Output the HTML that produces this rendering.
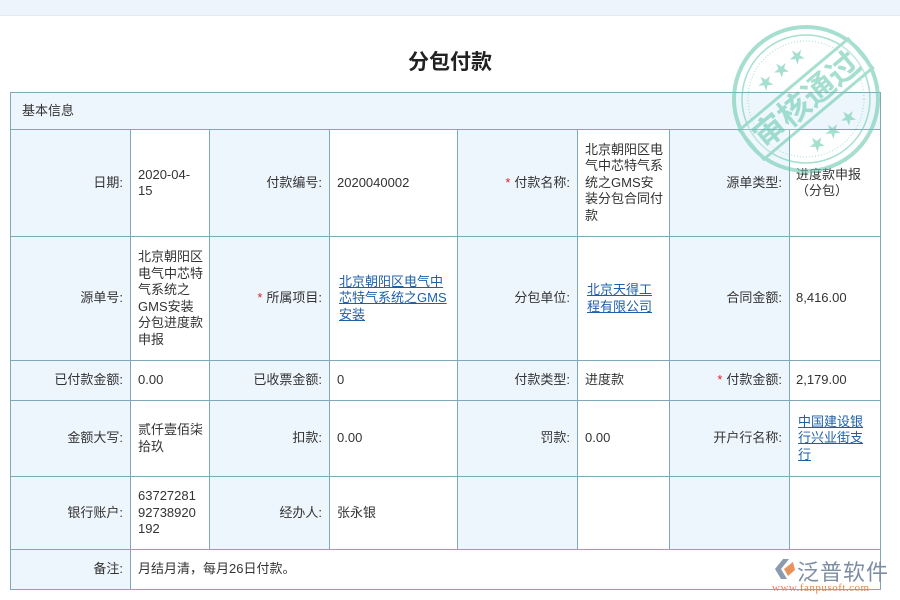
<!DOCTYPE html>
<html><head><meta charset="utf-8"><style>
*{margin:0;padding:0;box-sizing:border-box}
body{width:900px;height:600px;background:#fff;position:relative;overflow:hidden;font-family:"Liberation Sans","Noto Sans CJK SC",sans-serif;font-size:13px;color:#333}
.top{position:absolute;left:0;top:0;width:900px;height:16px;background:#eef4fc;border-bottom:1px solid #e3e9f1}
h1{position:absolute;top:46px;left:0;width:900px;text-align:center;font-size:21px;font-weight:bold;color:#222}
.c{position:absolute;border-right:1px solid #7fa9b8;border-bottom:1px solid #7fa9b8;display:flex;align-items:center;line-height:16.5px}
.l{background:#eef6fd;justify-content:flex-end;padding-right:7px;text-align:right}
.v{background:#fff;padding-left:7px;padding-right:4px}
.frame{position:absolute;left:10px;top:92px;width:871px;height:498px;border-left:1px solid #7fa9b8;border-top:1px solid #7fa9b8}
a{color:#1f5fa8;text-decoration:underline}
.r{color:#d22;margin-right:4px}
</style></head><body>
<div class="top"></div>
<h1>分包付款</h1>
<div class="frame"></div>
<div class="c" style="left:10px;top:92px;width:871px;height:38px;background:#eef6fd;padding-left:11px;border-left:1px solid #7fa9b8;border-top:1px solid #7fa9b8">基本信息</div>

<div class="c l" style="left:11px;top:130px;width:120px;height:107px">日期:</div>
<div class="c v" style="left:131px;top:130px;width:79px;height:107px">2020-04-<br>15</div>
<div class="c l" style="left:210px;top:130px;width:120px;height:107px">付款编号:</div>
<div class="c v" style="left:330px;top:130px;width:128px;height:107px">2020040002</div>
<div class="c l" style="left:458px;top:130px;width:120px;height:107px"><span class="r">*</span>付款名称:</div>
<div class="c v" style="left:578px;top:130px;width:92px;height:107px">北京朝阳区电<br>气中芯特气系<br>统之GMS安<br>装分包合同付<br>款</div>
<div class="c l" style="left:670px;top:130px;width:120px;height:107px">源单类型:</div>
<div class="c v" style="left:790px;top:130px;width:91px;height:107px;padding-left:6px">进度款申报<br>（分包）</div>

<div class="c l" style="left:11px;top:237px;width:120px;height:124px">源单号:</div>
<div class="c v" style="left:131px;top:237px;width:79px;height:124px">北京朝阳区<br>电气中芯特<br>气系统之<br>GMS安装<br>分包进度款<br>申报</div>
<div class="c l" style="left:210px;top:237px;width:120px;height:124px"><span class="r">*</span>所属项目:</div>
<div class="c v" style="left:330px;top:237px;width:128px;height:124px;padding-left:9px"><a>北京朝阳区电气中<br>芯特气系统之GMS<br>安装</a></div>
<div class="c l" style="left:458px;top:237px;width:120px;height:124px">分包单位:</div>
<div class="c v" style="left:578px;top:237px;width:92px;height:124px;padding-left:9px"><a>北京天得工<br>程有限公司</a></div>
<div class="c l" style="left:670px;top:237px;width:120px;height:124px">合同金额:</div>
<div class="c v" style="left:790px;top:237px;width:91px;height:124px;padding-left:6px">8,416.00</div>

<div class="c l" style="left:11px;top:361px;width:120px;height:40px">已付款金额:</div>
<div class="c v" style="left:131px;top:361px;width:79px;height:40px">0.00</div>
<div class="c l" style="left:210px;top:361px;width:120px;height:40px">已收票金额:</div>
<div class="c v" style="left:330px;top:361px;width:128px;height:40px">0</div>
<div class="c l" style="left:458px;top:361px;width:120px;height:40px">付款类型:</div>
<div class="c v" style="left:578px;top:361px;width:92px;height:40px">进度款</div>
<div class="c l" style="left:670px;top:361px;width:120px;height:40px"><span class="r">*</span>付款金额:</div>
<div class="c v" style="left:790px;top:361px;width:91px;height:40px;padding-left:6px">2,179.00</div>

<div class="c l" style="left:11px;top:401px;width:120px;height:76px">金额大写:</div>
<div class="c v" style="left:131px;top:401px;width:79px;height:76px">贰仟壹佰柒<br>拾玖</div>
<div class="c l" style="left:210px;top:401px;width:120px;height:76px">扣款:</div>
<div class="c v" style="left:330px;top:401px;width:128px;height:76px">0.00</div>
<div class="c l" style="left:458px;top:401px;width:120px;height:76px">罚款:</div>
<div class="c v" style="left:578px;top:401px;width:92px;height:76px">0.00</div>
<div class="c l" style="left:670px;top:401px;width:120px;height:76px">开户行名称:</div>
<div class="c v" style="left:790px;top:401px;width:91px;height:76px;padding-left:8px"><a>中国建设银<br>行兴业街支<br>行</a></div>

<div class="c l" style="left:11px;top:477px;width:120px;height:73px">银行账户:</div>
<div class="c v" style="left:131px;top:477px;width:79px;height:73px">63727281<br>92738920<br>192</div>
<div class="c l" style="left:210px;top:477px;width:120px;height:73px">经办人:</div>
<div class="c v" style="left:330px;top:477px;width:128px;height:73px">张永银</div>
<div class="c l" style="left:458px;top:477px;width:120px;height:73px"></div>
<div class="c v" style="left:578px;top:477px;width:92px;height:73px"></div>
<div class="c l" style="left:670px;top:477px;width:120px;height:73px"></div>
<div class="c v" style="left:790px;top:477px;width:91px;height:73px"></div>

<div class="c l" style="left:11px;top:550px;width:120px;height:40px">备注:</div>
<div class="c v" style="left:131px;top:550px;width:750px;height:40px">月结月清，每月26日付款。</div>

<svg style="position:absolute;left:731px;top:24px;opacity:.6" width="150" height="150" viewBox="0 0 150 150">
<g fill="none" stroke="#6ccbb0">
<circle cx="75" cy="75" r="72" stroke-width="4"/>
<circle cx="75" cy="75" r="64" stroke-width="1.5"/>
<circle cx="75" cy="75" r="58" stroke-width="1" stroke-dasharray="1 2"/>
</g>
<g transform="rotate(-40 75 75)">
<rect x="4" y="56" width="142" height="38" fill="rgba(255,255,255,0.3)" stroke="#6ccbb0" stroke-width="3"/>
<text x="75" y="87" text-anchor="middle" font-size="32" font-weight="bold" fill="#6ccbb0" font-family="Noto Sans CJK SC,sans-serif">审核通过</text>
<text x="75" y="42" text-anchor="middle" font-size="16" fill="#6ccbb0">★ ★ ★</text>
<text x="75" y="122" text-anchor="middle" font-size="16" fill="#6ccbb0">★ ★ ★</text>
</g>
</svg>

<svg style="position:absolute;left:771px;top:556px" width="26" height="26" viewBox="0 0 26 26">
<path d="M4 13 L12 3 L18 3 L10 13 L16 23 L10 23 Z" fill="#8a9bb0"/>
<path d="M13 13 L22 6 L24 14 L17 20 Z" fill="#e8935c"/>
</svg>
<div style="position:absolute;left:797px;top:555px;font-size:22px;color:#7d8ea3;font-family:'Noto Sans CJK SC',sans-serif;letter-spacing:1px">泛普软件</div>
<div style="position:absolute;left:772px;top:582px;font-size:11px;color:#d9885a;font-family:'Liberation Serif',serif;letter-spacing:.5px">www.fanpusoft.com</div>
</body></html>
